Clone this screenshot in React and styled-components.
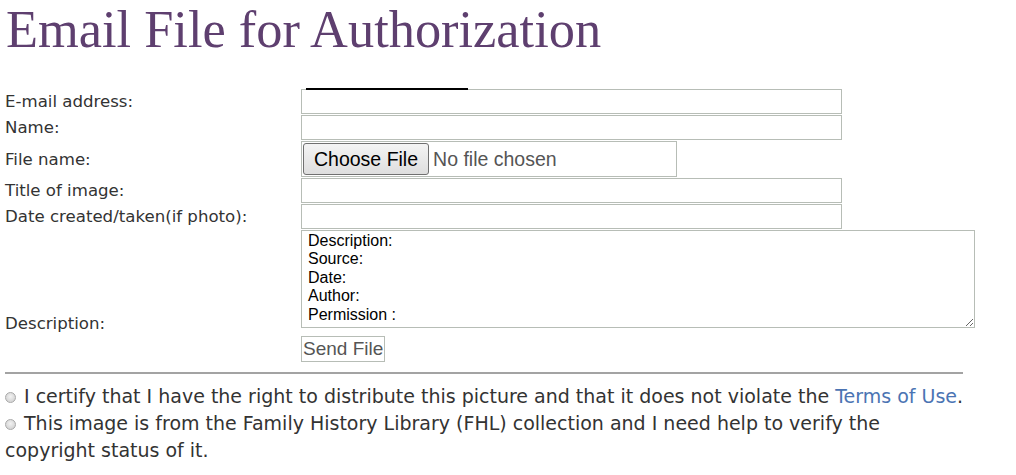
import React from "react";
import styled, { createGlobalStyle } from "styled-components";

const Global = createGlobalStyle`
  html, body { margin: 0; padding: 0; background: #fff; }
  body { font-family: "DejaVu Sans", Verdana, sans-serif; color: #333; }
`;

const Page = styled.div`
  padding: 0 0 0 5px;
  width: 1011px;
`;

const Title = styled.h1`
  margin: 0 0 31px 1px;
  font-family: "Liberation Serif", "Times New Roman", serif;
  font-weight: normal;
  font-size: 52.4px;
  line-height: 58px;
  color: #5e3f6f;
`;

const FormGrid = styled.div`
  display: grid;
  grid-template-columns: 296px auto;
  row-gap: 1px;
  align-items: center;
`;

const Label = styled.label`
  font-size: 16.6px;
  color: #333;
  align-self: ${(p) => (p.$bottom ? "end" : "center")};
  margin-bottom: ${(p) => (p.$bottom ? "-5px" : "0")};
`;

const FieldWrap = styled.div`
  position: relative;
  display: flex;
`;

const TextInput = styled.input`
  box-sizing: border-box;
  width: 541px;
  height: 25px;
  margin: 0;
  padding: 0 4px;
  border: 1px solid #b7bdb6;
  font-family: "Liberation Sans", Arial, sans-serif;
  font-size: 16px;
  outline: none;
`;

const Redaction = styled.span`
  position: absolute;
  left: 5px;
  top: -1px;
  width: 162px;
  height: 2px;
  background: #000;
`;

const FileBox = styled.div`
  box-sizing: border-box;
  width: 376px;
  height: 36px;
  border: 1px solid #b7bdb6;
  display: flex;
  align-items: center;
  padding: 0 1px;
  gap: 4px;
  font-family: "Liberation Sans", Arial, sans-serif;
  font-size: 19.5px;
`;

const ChooseButton = styled.span`
  box-sizing: border-box;
  height: 32px;
  padding: 0 10px;
  display: flex;
  align-items: center;
  border: 1px solid #707070;
  border-radius: 3px;
  background: linear-gradient(#f4f4f4, #dedede);
  color: #000;
`;

const NoFile = styled.span`
  color: #555;
`;

const TextArea = styled.textarea`
  box-sizing: border-box;
  width: 674px;
  height: 98px;
  margin: 0;
  padding: 1px 6px;
  border: 1px solid #b7bdb6;
  font-family: "Liberation Sans", Arial, sans-serif;
  font-size: 16px;
  line-height: 18.4px;
  color: #000;
  resize: both;
  overflow: hidden;
  outline: none;
`;

const ButtonRow = styled.div`
  grid-column: 2;
  margin-top: 7px;
  display: flex;
`;

const SendButton = styled.button`
  box-sizing: border-box;
  height: 26px;
  padding: 0 1px;
  border: 1px solid #b7bdb6;
  background: #fff;
  font-family: "Liberation Sans", Arial, sans-serif;
  font-size: 19px;
  color: #555;
  line-height: 22px;
`;

const Rule = styled.hr`
  width: 958px;
  margin: 10px 0 0 0;
  border: none;
  border-top: 2px solid #a3a3a3;
`;

const Options = styled.div`
  margin-top: 9px;
  font-size: 19px;
  line-height: 27px;
  color: #333;
  width: 962px;
`;

const Option = styled.div``;

const Radio = styled.span`
  display: inline-block;
  box-sizing: border-box;
  width: 11px;
  height: 11px;
  border-radius: 50%;
  border: 1px solid #a9a9a9;
  background: radial-gradient(circle at 50% 40%, #f2f2f2 0, #d6d6d6 70%);
  margin-right: 8px;
  vertical-align: 0px;
`;

const Link = styled.a`
  color: #4b74b3;
  text-decoration: none;
`;

export default function App() {
  return (
    <>
      <Global />
      <Page>
        <Title>Email File for Authorization</Title>
        <FormGrid>
          <Label>E-mail address:</Label>
          <FieldWrap>
            <TextInput type="text" />
            <Redaction />
          </FieldWrap>
          <Label>Name:</Label>
          <FieldWrap>
            <TextInput type="text" />
          </FieldWrap>
          <Label>File name:</Label>
          <FieldWrap>
            <FileBox>
              <ChooseButton>Choose File</ChooseButton>
              <NoFile>No file chosen</NoFile>
            </FileBox>
          </FieldWrap>
          <Label>Title of image:</Label>
          <FieldWrap>
            <TextInput type="text" />
          </FieldWrap>
          <Label>Date created/taken(if photo):</Label>
          <FieldWrap>
            <TextInput type="text" />
          </FieldWrap>
          <Label $bottom>Description:</Label>
          <FieldWrap>
            <TextArea
              defaultValue={"Description:\nSource:\nDate:\nAuthor:\nPermission :"}
            />
          </FieldWrap>
          <ButtonRow>
            <SendButton type="button">Send File</SendButton>
          </ButtonRow>
        </FormGrid>
        <Rule />
        <Options>
          <Option>
            <Radio />I certify that I have the right to distribute this picture and that it does not violate the{" "}
            <Link href="#">Terms of Use</Link>.
          </Option>
          <Option>
            <Radio />This image is from the Family History Library (FHL) collection and I need help to verify the
            copyright status of it.
          </Option>
        </Options>
      </Page>
    </>
  );
}
